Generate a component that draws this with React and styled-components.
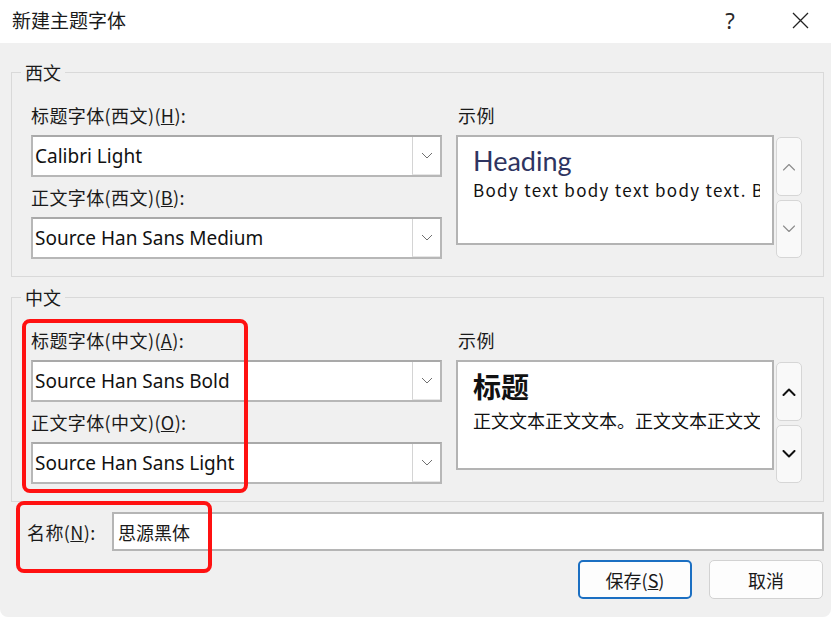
import React from 'react';
import styled, { createGlobalStyle } from 'styled-components';

const GlobalStyle = createGlobalStyle`
  html, body {
    margin: 0;
    padding: 0;
    background: #ffffff;
  }
  body {
    font-family: "Noto Sans CJK SC", "Noto Sans", sans-serif;
    color: #1a1a1a;
  }
  * { box-sizing: border-box; }
`;

const Window = styled.div`
  position: relative;
  width: 831px;
  height: 617px;
  display: flex;
  flex-direction: column;
  background: #ffffff;
  overflow: hidden;
`;

const TitleBar = styled.div`
  height: 43px;
  flex-shrink: 0;
  display: flex;
  align-items: center;
  padding: 0 11px 3px 12px;
  background: #ffffff;
`;

const Title = styled.div`
  flex: 1;
  font-size: 19px;
  line-height: 24px;
  color: #1a1a1a;
`;

const TitleButton = styled.div`
  width: 40px;
  height: 30px;
  display: flex;
  align-items: center;
  justify-content: center;
  font-family: "Noto Sans", sans-serif;
  font-size: 22px;
  color: #2a2a2a;
  margin-left: ${(p) => p.$gap || 0}px;
`;

const Body = styled.div`
  flex: 1;
  display: flex;
  flex-direction: column;
  background: #f0f0f0;
  padding: 18px 7px 0 11px;
  border-radius: 0 0 8px 8px;
`;

const Group = styled.fieldset`
  margin: ${(p) => (p.$first ? 0 : 9)}px 0 0;
  padding: 0;
  min-width: 0;
  border: 1px solid #d9d9d9;
`;

const Legend = styled.legend`
  margin-left: 9px;
  padding: 0 4px;
  font-size: 18px;
  line-height: 22px;
  color: #1a1a1a;
`;

const GroupGrid = styled.div`
  display: grid;
  grid-template-columns: 411px 1fr;
  column-gap: 14px;
  padding: 19px 21px 17px 19px;
`;

const Column = styled.div`
  display: flex;
  flex-direction: column;
`;

const FieldLabel = styled.div`
  height: 26px;
  line-height: 26px;
  font-size: 18px;
  letter-spacing: 0.4px;
  margin: ${(p) => (p.$next ? 7 : 0)}px 0 7px ${(p) => p.$indent || 0}px;
  white-space: nowrap;
`;

const Combo = styled.div`
  height: 42px;
  display: flex;
  background: #ffffff;
  border: 2px solid #b7b7b7;
  border-top-color: #a9a9a9;
`;

const ComboValue = styled.div`
  flex: 1;
  display: flex;
  align-items: center;
  padding-left: 2px;
  font-family: "Noto Sans", sans-serif;
  font-size: 19px;
  color: #111;
  white-space: nowrap;
  overflow: hidden;
`;

const DropButton = styled.div`
  width: 28px;
  display: flex;
  align-items: center;
  justify-content: center;
  border-left: 1px solid #d4d4d4;
  border-bottom: 1px solid #e6e6e6;
  background: #ffffff;
`;

const PreviewRow = styled.div`
  display: flex;
  align-items: flex-start;
`;

const PreviewBox = styled.div`
  width: 318px;
  height: 110px;
  background: #ffffff;
  border: 2px solid #b3b3b3;
  padding: 8px 12px 0 15px;
`;

const PreviewLine = styled.div`
  white-space: nowrap;
  overflow: hidden;
  font-family: ${(p) => (p.$heading && !p.$cjk ? '"Lato", "Noto Sans", sans-serif' : '"Noto Sans CJK SC", sans-serif')};
  font-size: ${(p) => (p.$heading ? (p.$cjk ? 28 : 27) : p.$cjk ? 18 : 17)}px;
  font-weight: ${(p) => (p.$heading && p.$cjk ? 700 : 400)};
  letter-spacing: ${(p) => (!p.$heading && !p.$cjk ? 1.3 : 0)}px;
  line-height: ${(p) => (p.$heading ? 32 : 26)}px;
  margin-top: ${(p) => (!p.$heading && p.$cjk ? 5 : 0)}px;
  color: ${(p) => (p.$heading && !p.$cjk ? '#2e3461' : '#111')};
`;

const SpinColumn = styled.div`
  display: flex;
  flex-direction: column;
  gap: 4px;
  margin: 2px 0 0 2px;
`;

const SpinButton = styled.div`
  width: 26px;
  height: ${(p) => p.$h}px;
  display: flex;
  align-items: center;
  justify-content: center;
  background: #f9f9f9;
  border: 1px solid #d6d6d6;
  border-radius: 5px;
`;

const NameRow = styled.div`
  display: flex;
  align-items: center;
  margin-top: 10px;
`;

const NameLabel = styled.div`
  width: 85px;
  margin-left: 16px;
  font-size: 18px;
  line-height: 26px;
  letter-spacing: 0.4px;
  white-space: nowrap;
`;

const NameInput = styled.div`
  flex: 1;
  height: 39px;
  display: flex;
  align-items: center;
  padding-left: 4px;
  background: #ffffff;
  border: 2px solid #b5b5b5;
  font-size: 18px;
`;

const ButtonRow = styled.div`
  display: flex;
  justify-content: flex-end;
  gap: 17px;
  margin-top: 9px;
  padding-right: 1px;
`;

const Button = styled.div`
  width: 114px;
  height: 39px;
  display: flex;
  align-items: center;
  justify-content: center;
  font-size: 18px;
  background: #fdfdfd;
  border: ${(p) => (p.$primary ? '2px solid #1b6fc2' : '1px solid #d2d2d2')};
  border-radius: 5px;
`;

const Annotation = styled.div`
  position: absolute;
  left: ${(p) => p.$x}px;
  top: ${(p) => p.$y}px;
  width: ${(p) => p.$w}px;
  height: ${(p) => p.$h}px;
  border: 4px solid #ff1111;
  border-radius: 8px;
  pointer-events: none;
`;

const Chevron = ({ up, dark }) => (
  <svg width="14" height="8" viewBox="0 0 14 8">
    <path
      d={up ? 'M1.5 7 L7 1.5 L12.5 7' : 'M1.5 1 L7 6.5 L12.5 1'}
      fill="none"
      stroke={dark ? '#111' : '#8c8c8c'}
      strokeWidth={dark ? 2 : 1.1}
      strokeLinecap="round"
      strokeLinejoin="round"
    />
  </svg>
);

const SmallChevron = () => (
  <svg width="12" height="7" viewBox="0 0 12 7">
    <path d="M1 1 L6 6 L11 1" fill="none" stroke="#707070" strokeWidth="1" />
  </svg>
);

const CloseIcon = () => (
  <svg width="17" height="17" viewBox="0 0 17 17">
    <path d="M1 1 L16 16 M16 1 L1 16" stroke="#222" strokeWidth="1.3" />
  </svg>
);

const ComboBox = ({ value }) => (
  <Combo>
    <ComboValue>{value}</ComboValue>
    <DropButton>
      <SmallChevron />
    </DropButton>
  </Combo>
);

const FontGroup = ({ title, first, fields, heading, body, cjk }) => (
  <Group $first={first}>
    <Legend>{title}</Legend>
    <GroupGrid>
      <Column>
        {fields.map((f, i) => (
          <React.Fragment key={f.label}>
            <FieldLabel $next={i > 0}>
              {f.label}(<u>{f.key}</u>):
            </FieldLabel>
            <ComboBox value={f.value} />
          </React.Fragment>
        ))}
      </Column>
      <Column>
        <FieldLabel $indent={2}>示例</FieldLabel>
        <PreviewRow>
          <PreviewBox>
            <PreviewLine $heading $cjk={cjk}>{heading}</PreviewLine>
            <PreviewLine $cjk={cjk}>{body}</PreviewLine>
          </PreviewBox>
          <SpinColumn>
            <SpinButton $h={59}>
              <Chevron up dark={cjk} />
            </SpinButton>
            <SpinButton $h={58}>
              <Chevron dark={cjk} />
            </SpinButton>
          </SpinColumn>
        </PreviewRow>
      </Column>
    </GroupGrid>
  </Group>
);

const App = () => {
  return (
    <Window>
      <GlobalStyle />
      <TitleBar>
        <Title>新建主题字体</Title>
        <TitleButton>?</TitleButton>
        <TitleButton $gap={30}>
          <CloseIcon />
        </TitleButton>
      </TitleBar>
      <Body>
        <FontGroup
          first
          title="西文"
          fields={[
            { label: '标题字体(西文)', key: 'H', value: 'Calibri Light' },
            { label: '正文字体(西文)', key: 'B', value: 'Source Han Sans Medium' },
          ]}
          heading="Heading"
          body="Body text body text body text. Body text body text."
        />
        <FontGroup
          cjk
          title="中文"
          fields={[
            { label: '标题字体(中文)', key: 'A', value: 'Source Han Sans Bold' },
            { label: '正文字体(中文)', key: 'O', value: 'Source Han Sans Light' },
          ]}
          heading="标题"
          body="正文文本正文文本。正文文本正文文本。"
        />
        <NameRow>
          <NameLabel>
            名称(<u>N</u>):
          </NameLabel>
          <NameInput>思源黑体</NameInput>
        </NameRow>
        <ButtonRow>
          <Button $primary>
            保存(<u>S</u>)
          </Button>
          <Button>取消</Button>
        </ButtonRow>
      </Body>
      <Annotation $x={22} $y={319} $w={226} $h={174} />
      <Annotation $x={16} $y={501} $w={196} $h={72} />
    </Window>
  );
};

export default App;
